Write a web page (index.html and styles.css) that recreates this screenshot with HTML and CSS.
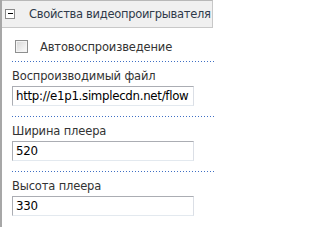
FILE: index.html
```html
<!DOCTYPE html>
<html>
<head>
<meta charset="utf-8">
<link rel="stylesheet" href="styles.css">
</head>
<body>
<div class="panel">
  <div class="header">
    <span class="toggle"><span class="minus"></span></span>
    <span class="title">Свойства видеопроигрывателя</span>
  </div>
  <div class="body">
    <div class="row check-row">
      <span class="checkbox"></span>
      <span class="check-label">Автовоспроизведение</span>
    </div>
    <div class="row field">
      <div class="label">Воспроизводимый файл</div>
      <div class="input">http://e1p1.simplecdn.net/flow</div>
    </div>
    <div class="row field">
      <div class="label">Ширина плеера</div>
      <div class="input">520</div>
    </div>
    <div class="row field">
      <div class="label">Высота плеера</div>
      <div class="input">330</div>
    </div>
  </div>
</div>
</body>
</html>
```
FILE: styles.css
```css
html, body {
  margin: 0;
  padding: 0;
  background: #ffffff;
}
body {
  width: 216px;
  height: 227px;
  overflow: hidden;
  font-family: "DejaVu Sans", Verdana, sans-serif;
  font-size: 11.5px;
  letter-spacing: -0.15px;
  color: #333333;
}
.panel {
  border-left: 2px solid #a7a7a7;
  height: 227px;
  box-sizing: border-box;
}
.header {
  display: flex;
  align-items: center;
  height: 26px;
  width: 210px;
  background: #f0f0f0;
  border-top: 1px solid #b8b8b8;
  border-right: 1px solid #c8c8c8;
  border-bottom: 1px solid #c8c8c8;
  box-sizing: content-box;
}
.toggle {
  box-sizing: border-box;
  width: 10px;
  height: 10px;
  margin-left: 3px;
  margin-top: -1px;
  border: 1px solid #8a8a8a;
  background: #ffffff;
  display: flex;
  align-items: center;
  justify-content: center;
}
.minus {
  width: 5px;
  height: 1px;
  background: #000000;
}
.title {
  margin-left: 14px;
  color: #2f3a4a;
  letter-spacing: -0.3px;
  white-space: nowrap;
}
.body {
  padding-left: 10px;
}
.row {
  width: 202px;
}
.check-row {
  display: flex;
  align-items: center;
  height: 33px;
  padding-top: 4px;
  box-sizing: border-box;
}
.checkbox {
  box-sizing: border-box;
  width: 13px;
  height: 13px;
  margin-left: 3px;
  border: 1px solid #8e8f8f;
  background: linear-gradient(135deg, #d6d6d6 0%, #f2f2f2 70%, #fbfbfb 100%);
  box-shadow: inset 0 0 0 1px #f4f4f4;
}
.check-label {
  margin-left: 12px;
}
.field {
  background-image: linear-gradient(to right, #3f6fc4 1px, transparent 1px);
  background-size: 3px 1px;
  background-repeat: repeat-x;
  background-position: 0 0;
  padding-top: 6px;
  padding-bottom: 10px;
}
.label {
  height: 18px;
  line-height: 18px;
}
.input {
  box-sizing: border-box;
  width: 182px;
  height: 20px;
  margin-top: 1px;
  border: 1px solid #abadb3;
  border-right-color: #dbdfe6;
  border-bottom-color: #e3e9ef;
  padding: 0 3px;
  line-height: 18px;
  font-size: 11.8px;
  letter-spacing: -0.3px;
  color: #000000;
  white-space: nowrap;
  overflow: hidden;
}
```
